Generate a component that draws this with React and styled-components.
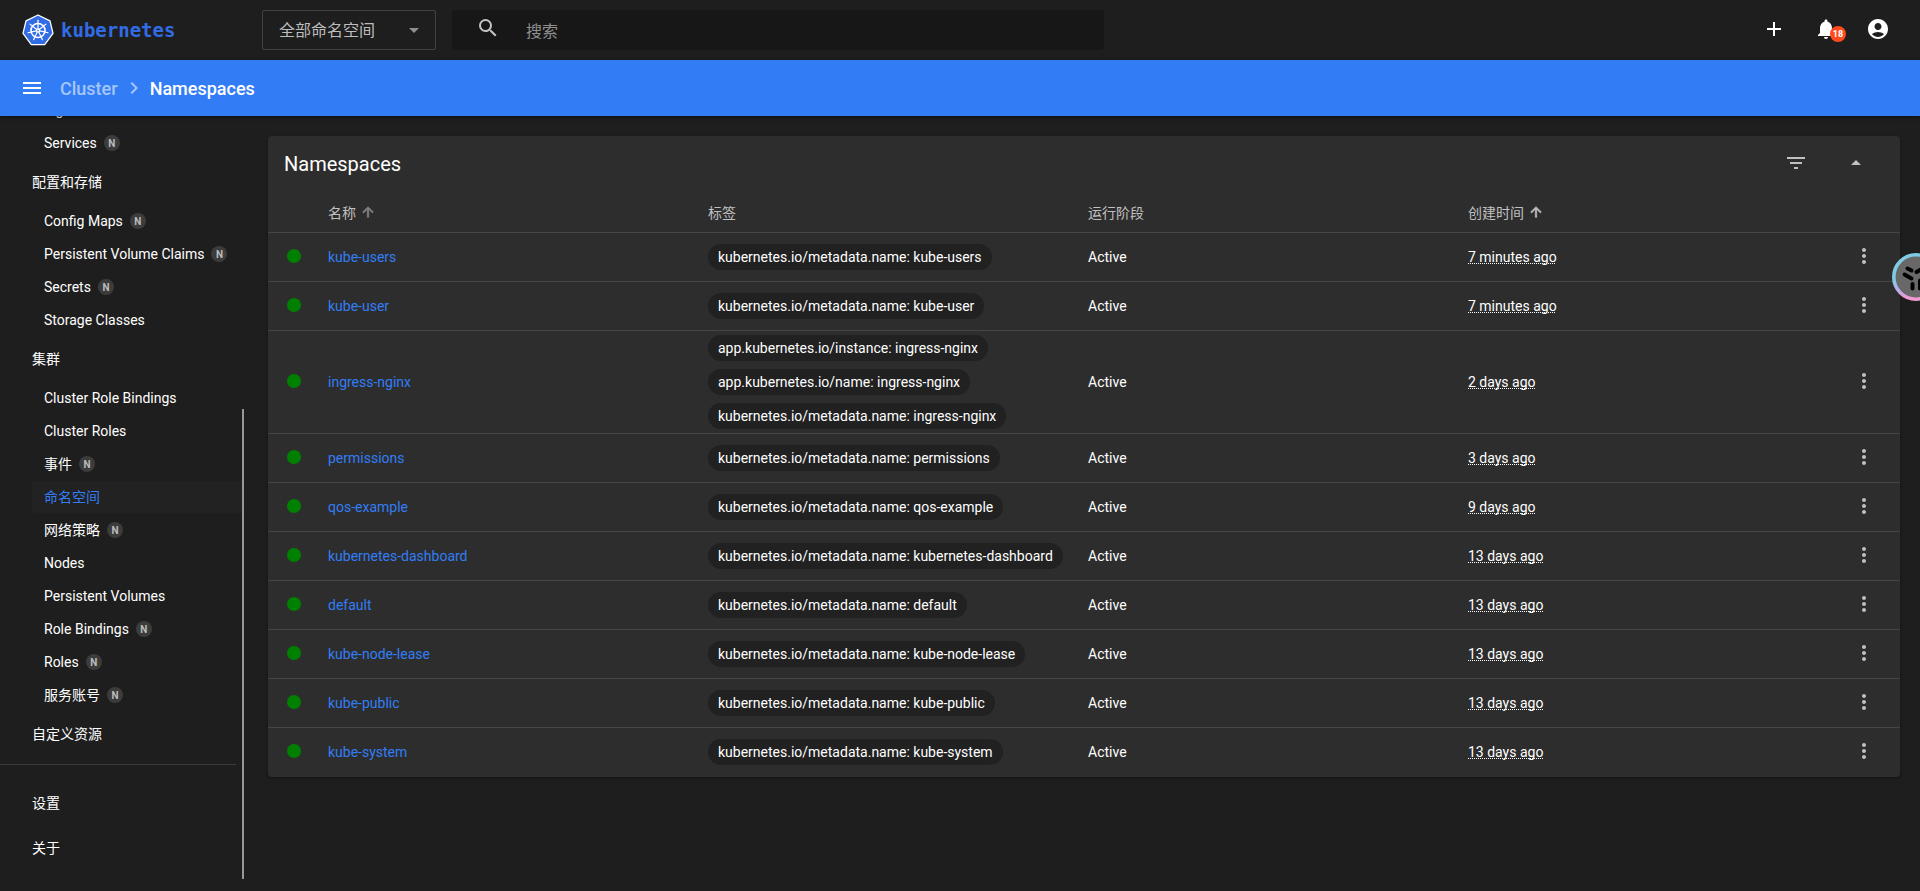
import React, { useState } from "react";
import styled, { createGlobalStyle } from "styled-components";
import {
    MdAccountCircle,
    MdAdd,
    MdArrowDropDown,
    MdArrowDropUp,
    MdArrowUpward,
    MdChevronRight,
    MdFilterList,
    MdMenu,
    MdMoreVert,
    MdNotifications,
    MdSearch,
} from "react-icons/md";

const GlobalStyle = createGlobalStyle`
    *,
    *::before,
    *::after {
        box-sizing: border-box;
    }

    body {
        margin: 0;
        background: #1e1e1e;
        color: #fff;
        font-family: Roboto, "Noto Sans CJK SC", sans-serif;
        font-size: 14px;
        line-height: 20px;
    }

    button,
    input,
    select {
        font: inherit;
        color: inherit;
    }

    a {
        color: inherit;
        text-decoration: none;
    }
`;

const Page = styled.div`
    display: flex;
    flex-direction: column;
    height: 100vh;
    overflow: hidden;
`;

const TopBar = styled.header`
    display: flex;
    align-items: center;
    flex: none;
    height: 60px;
    padding: 0 22px;
`;

const Brand = styled.a`
    display: flex;
    align-items: center;
    gap: 7px;
    width: 240px;
    color: #326ce5;
    font-family: "DejaVu Sans Mono", monospace;
    font-size: 19px;
    font-weight: 700;
`;

const NamespacePicker = styled.div`
    display: grid;
    align-items: center;
    flex: none;
    width: 174px;
    height: 40px;
    margin-right: 16px;
    border: 1px solid #424242;
    border-radius: 2px;
    color: #bdbdbd;

    > * {
        grid-area: 1 / 1;
    }

    svg {
        justify-self: end;
        margin-right: 9px;
        color: #8f8f8f;
        pointer-events: none;
    }
`;

const NamespaceSelect = styled.select`
    width: 100%;
    height: 38px;
    padding: 2px 36px 0 16px;
    appearance: none;
    border: 0;
    background: transparent;
    font-size: 16px;
`;

const SearchBox = styled.label`
    display: flex;
    align-items: center;
    flex: 0 1 652px;
    height: 40px;
    padding-left: 24px;
    border-radius: 4px;
    background: #171717;

    svg {
        flex: none;
        margin-bottom: 4px;
        color: #c4c4c4;
    }
`;

const SearchInput = styled.input`
    flex: 1;
    min-width: 0;
    height: 40px;
    margin-left: 26px;
    padding: 2px 0 0;
    border: 0;
    outline: none;
    background: transparent;
    font-size: 16px;

    &::placeholder {
        color: #8f8f8f;
        opacity: 1;
    }
`;

const Actions = styled.div`
    display: flex;
    gap: 12px;
    margin: 0 0 2px auto;
`;

const IconButton = styled.button`
    display: inline-flex;
    align-items: center;
    justify-content: center;
    position: relative;
    width: ${({ $size }) => $size || 40}px;
    height: ${({ $size }) => $size || 40}px;
    padding: 0;
    border: 0;
    background: transparent;
    color: ${({ $muted }) => ($muted ? "#c0c0c0" : "#fff")};
    cursor: pointer;
`;

const Count = styled.span`
    position: absolute;
    top: 17px;
    left: 24px;
    width: 16px;
    height: 16px;
    border-radius: 50%;
    background: #ff4a1c;
    font-size: 9px;
    font-weight: 700;
    line-height: 16px;
    text-align: center;
`;

const ActionBar = styled.div`
    display: flex;
    align-items: center;
    flex: none;
    height: 56px;
    padding: 0 20px;
    background: #327df5;
    box-shadow: 0 1px 4px rgba(0, 0, 0, 0.5);
    z-index: 1;
`;

const Breadcrumbs = styled.nav`
    display: flex;
    align-items: center;
    gap: 4px;
    margin-left: 16px;
    font-size: 18px;
    font-weight: 500;
    line-height: 24px;
`;

const Crumb = styled.a`
    padding-top: 1px;
    color: ${({ $current }) => ($current ? "#fff" : "#a5c6fa")};
`;

const Separator = styled(MdChevronRight)`
    color: #a5c6fa;
`;

const Body = styled.div`
    display: flex;
    flex: 1;
    min-height: 0;
`;

/* the list is scrolled to its end */
const Sidebar = styled.nav`
    display: flex;
    flex-direction: column;
    justify-content: flex-end;
    position: relative;
    flex: none;
    width: 244px;
    padding-bottom: 20px;
    overflow: hidden;

    &::after {
        content: "";
        position: absolute;
        right: 0;
        bottom: 12px;
        width: 2px;
        height: 470px;
        background: #979797;
    }
`;

const GroupLink = styled.a`
    flex: none;
    height: 45px;
    padding-left: 32px;
    line-height: 45px;
`;

const NavLink = styled.a`
    display: flex;
    align-items: center;
    flex: none;
    gap: 7px;
    height: 32px;
    margin: 0 0 1px 32px;
    padding-left: 12px;
    border-radius: 4px;
    background: ${({ $active }) => ($active ? "#222" : "transparent")};
    color: ${({ $active }) => ($active ? "#327df5" : "#fff")};
`;

const Scope = styled.span`
    width: 16px;
    height: 16px;
    border-radius: 50%;
    background: #3c3c3c;
    color: #bdbdbd;
    font-size: 10px;
    font-weight: 700;
    line-height: 17px;
    text-align: center;
`;

const Divider = styled.hr`
    flex: none;
    width: 236px;
    margin: 7px 0 16px;
    border: 0;
    border-top: 1px solid #3b3b3b;
`;

const Content = styled.main`
    flex: 1;
    min-width: 0;
    padding: 20px 20px 20px 24px;
    overflow: hidden;
`;

const Card = styled.section`
    border-radius: 4px;
    background: #2d2d2d;
    box-shadow: 0 1px 3px rgba(0, 0, 0, 0.35);
`;

const CardHeader = styled.div`
    display: flex;
    align-items: center;
    height: 56px;
    padding: 0 24px 0 16px;
`;

const CardTitle = styled.h1`
    flex: 1;
    margin: 0;
    font-size: 20px;
    font-weight: 400;
    line-height: 24px;
`;

const CardTools = styled.div`
    display: flex;
    gap: 20px;
    padding-bottom: 2px;
`;

const Table = styled.table`
    width: 100%;
    table-layout: fixed;
    border-collapse: separate;
    border-spacing: 0;
`;

const Col = styled.col`
    width: ${({ $width }) => $width};
`;

const HeadCell = styled.th`
    height: 41px;
    padding: 2px 0 0;
    border-bottom: 1px solid #464646;
    color: #c0c0c0;
    font-weight: 400;
    text-align: left;
`;

const SortButton = styled.button`
    display: flex;
    align-items: center;
    gap: 4px;
    padding: 0;
    border: 0;
    background: transparent;

    svg {
        margin-bottom: 2px;
        color: ${({ $active }) => ($active ? "#c0c0c0" : "#858585")};
        stroke-width: 1;
    }

    path[fill="none"] {
        stroke: none;
    }
`;

const Row = styled.tr`
    &:last-child td {
        border-bottom-color: transparent;
    }
`;

const Cell = styled.td`
    height: 49px;
    padding: 0;
    border-bottom: 1px solid #464646;
    vertical-align: middle;
`;

const Status = styled.span`
    display: block;
    width: 14px;
    height: 14px;
    margin: 0 0 2px 19px;
    border-radius: 50%;
    background: #008000;
`;

const NameLink = styled.a`
    color: #327df5;
`;

const Chips = styled.div`
    display: flex;
    flex-direction: column;
    align-items: flex-start;
    gap: 8px;
    padding: 4px 0;
`;

const Chip = styled.span`
    height: 26px;
    padding: 0 10px;
    border-radius: 13px;
    background: #212121;
    line-height: 26px;
    white-space: nowrap;
`;

const Age = styled.span`
    text-decoration: underline dotted 1px;
    text-decoration-skip-ink: none;
    text-underline-offset: 1px;
`;

const RowMenu = styled.div`
    display: flex;
    padding-bottom: 2px;
`;

const Assistant = styled.button`
    position: fixed;
    top: 253px;
    right: -20px;
    width: 48px;
    height: 48px;
    padding: 0;
    border: 0;
    background: transparent;
    z-index: 2;

    svg {
        display: block;
    }
`;

const navigation = [
    {
        items: [{ label: "Ingress Classes" }, { label: "Services", scoped: true }],
    },
    {
        title: "配置和存储",
        items: [
            { label: "Config Maps", scoped: true },
            { label: "Persistent Volume Claims", scoped: true },
            { label: "Secrets", scoped: true },
            { label: "Storage Classes" },
        ],
    },
    {
        title: "集群",
        items: [
            { label: "Cluster Role Bindings" },
            { label: "Cluster Roles" },
            { label: "事件", scoped: true },
            { label: "命名空间", active: true },
            { label: "网络策略", scoped: true },
            { label: "Nodes" },
            { label: "Persistent Volumes" },
            { label: "Role Bindings", scoped: true },
            { label: "Roles", scoped: true },
            { label: "服务账号", scoped: true },
        ],
    },
    { title: "自定义资源", items: [] },
];

const nameLabel = (name) => `kubernetes.io/metadata.name: ${name}`;

const namespaces = [
    { name: "kube-users", age: "7 minutes ago" },
    { name: "kube-user", age: "7 minutes ago" },
    {
        name: "ingress-nginx",
        age: "2 days ago",
        labels: [
            "app.kubernetes.io/instance: ingress-nginx",
            "app.kubernetes.io/name: ingress-nginx",
        ],
    },
    { name: "permissions", age: "3 days ago" },
    { name: "qos-example", age: "9 days ago" },
    { name: "kubernetes-dashboard", age: "13 days ago" },
    { name: "default", age: "13 days ago" },
    { name: "kube-node-lease", age: "13 days ago" },
    { name: "kube-public", age: "13 days ago" },
    { name: "kube-system", age: "13 days ago" },
];

const spokes = [0, 1, 2, 3, 4, 5, 6].map((i) => (i * 360) / 7);

function KubernetesLogo() {
    return (
        <svg width="32" height="32" viewBox="0 0 32 32" aria-hidden="true">
            <path
                d="M16 1 28 6.8 31 19.4 22.7 30.6H9.3L1 19.4 4 6.8Z"
                fill="#326ce5"
                stroke="#fff"
                strokeWidth="1.3"
                strokeLinejoin="round"
            />
            <g fill="none" stroke="#fff" strokeLinecap="round">
                <circle cx="16" cy="16.5" r="7" strokeWidth="1.6" />
                {spokes.map((angle) => (
                    <path
                        key={angle}
                        d="M16 14.5V6.3"
                        strokeWidth="1.2"
                        transform={`rotate(${angle} 16 16.5)`}
                    />
                ))}
            </g>
            <circle cx="16" cy="16.5" r="2.2" fill="#fff" />
            <circle cx="16" cy="16.5" r="0.8" fill="#326ce5" />
        </svg>
    );
}

function AssistantIcon() {
    return (
        <svg width="48" height="48" viewBox="0 0 48 48" aria-hidden="true">
            <defs>
                <linearGradient id="ring" x1="0" y1="0" x2="0.35" y2="1">
                    <stop offset="0.5" stopColor="#7fcbe3" />
                    <stop offset="0.72" stopColor="#b5aef0" />
                    <stop offset="0.95" stopColor="#f09ad2" />
                </linearGradient>
            </defs>
            <circle
                cx="24"
                cy="24"
                r="22.2"
                fill="#686868"
                stroke="url(#ring)"
                strokeWidth="3.6"
            />
            <g stroke="#000" strokeWidth="4" strokeLinecap="round">
                <path d="M15.5 15.5 19.5 17.5" />
                <path d="M12.5 21.5 19.5 25.5" />
                <path d="M20.5 31V35.5" />
                <path d="M24.5 19 31.5 15" />
                <path d="M28 27.5V35.5" />
                <path d="M31 23.5 35.5 21" />
            </g>
        </svg>
    );
}

function App() {
    const [namespace, setNamespace] = useState("all");
    const [query, setQuery] = useState("");

    return (
        <Page>
            <GlobalStyle />
            <TopBar>
                <Brand href="#">
                    <KubernetesLogo />
                    <span>kubernetes</span>
                </Brand>
                <NamespacePicker>
                    <NamespaceSelect
                        aria-label="命名空间"
                        value={namespace}
                        onChange={(e) => setNamespace(e.target.value)}
                    >
                        <option value="all">全部命名空间</option>
                        {namespaces.map(({ name }) => (
                            <option key={name} value={name}>
                                {name}
                            </option>
                        ))}
                    </NamespaceSelect>
                    <MdArrowDropDown size={24} />
                </NamespacePicker>
                <SearchBox>
                    <MdSearch size={24} />
                    <SearchInput
                        aria-label="搜索"
                        placeholder="搜索"
                        value={query}
                        onChange={(e) => setQuery(e.target.value)}
                    />
                </SearchBox>
                <Actions>
                    <IconButton aria-label="创建">
                        <MdAdd size={24} />
                    </IconButton>
                    <IconButton aria-label="通知">
                        <MdNotifications size={24} />
                        <Count>18</Count>
                    </IconButton>
                    <IconButton aria-label="用户">
                        <MdAccountCircle size={24} />
                    </IconButton>
                </Actions>
            </TopBar>

            <ActionBar>
                <IconButton $size={24} aria-label="菜单">
                    <MdMenu size={24} />
                </IconButton>
                <Breadcrumbs>
                    <Crumb href="#">Cluster</Crumb>
                    <Separator size={24} />
                    <Crumb href="#" $current>
                        Namespaces
                    </Crumb>
                </Breadcrumbs>
            </ActionBar>

            <Body>
                <Sidebar>
                    {navigation.map(({ title, items }) => (
                        <React.Fragment key={title || "services"}>
                            {title && <GroupLink href="#">{title}</GroupLink>}
                            {items.map(({ label, scoped, active }) => (
                                <NavLink key={label} href="#" $active={active}>
                                    {label}
                                    {scoped && <Scope>N</Scope>}
                                </NavLink>
                            ))}
                        </React.Fragment>
                    ))}
                    <Divider />
                    <GroupLink href="#">设置</GroupLink>
                    <GroupLink href="#">关于</GroupLink>
                </Sidebar>

                <Content>
                    <Card>
                        <CardHeader>
                            <CardTitle>Namespaces</CardTitle>
                            <CardTools>
                                <IconButton $muted aria-label="过滤">
                                    <MdFilterList size={24} />
                                </IconButton>
                                <IconButton $muted aria-label="收起">
                                    <MdArrowDropUp size={24} />
                                </IconButton>
                            </CardTools>
                        </CardHeader>
                        <Table>
                            <colgroup>
                                <Col $width="60px" />
                                <Col $width="auto" />
                                <Col $width="auto" />
                                <Col $width="auto" />
                                <Col $width="auto" />
                                <Col $width="52px" />
                            </colgroup>
                            <thead>
                                <tr>
                                    <HeadCell />
                                    <HeadCell>
                                        <SortButton>
                                            名称
                                            <MdArrowUpward size={16} />
                                        </SortButton>
                                    </HeadCell>
                                    <HeadCell>标签</HeadCell>
                                    <HeadCell>运行阶段</HeadCell>
                                    <HeadCell>
                                        <SortButton $active>
                                            创建时间
                                            <MdArrowUpward size={16} />
                                        </SortButton>
                                    </HeadCell>
                                    <HeadCell />
                                </tr>
                            </thead>
                            <tbody>
                                {namespaces.map(({ name, age, labels = [] }) => (
                                    <Row key={name}>
                                        <Cell>
                                            <Status />
                                        </Cell>
                                        <Cell>
                                            <NameLink href="#">{name}</NameLink>
                                        </Cell>
                                        <Cell>
                                            <Chips>
                                                {[...labels, nameLabel(name)].map(
                                                    (label) => (
                                                        <Chip key={label}>
                                                            {label}
                                                        </Chip>
                                                    )
                                                )}
                                            </Chips>
                                        </Cell>
                                        <Cell>Active</Cell>
                                        <Cell>
                                            <Age>{age}</Age>
                                        </Cell>
                                        <Cell>
                                            <RowMenu>
                                                <IconButton
                                                    $muted
                                                    $size={32}
                                                    aria-label="操作"
                                                >
                                                    <MdMoreVert size={24} />
                                                </IconButton>
                                            </RowMenu>
                                        </Cell>
                                    </Row>
                                ))}
                            </tbody>
                        </Table>
                    </Card>
                </Content>
            </Body>

            <Assistant aria-label="助手">
                <AssistantIcon />
            </Assistant>
        </Page>
    );
}

export default App;
